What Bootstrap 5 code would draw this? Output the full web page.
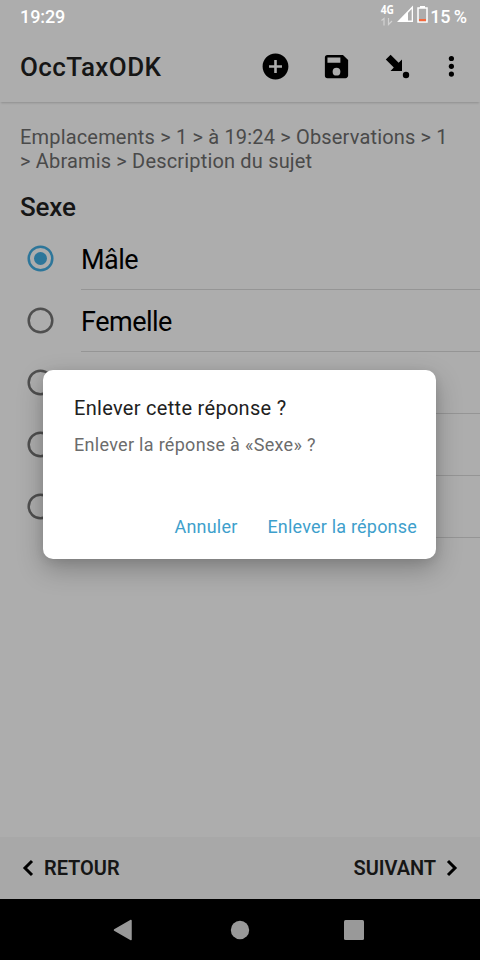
<!DOCTYPE html>
<html lang="fr">
<head>
<meta charset="utf-8">
<meta name="viewport" content="width=device-width, initial-scale=1">
<title>OccTaxODK</title>
<link href="https://cdn.jsdelivr.net/npm/bootstrap@5.3.0/dist/css/bootstrap.min.css" rel="stylesheet">
<style>
body{font-family:Roboto,sans-serif;background:#adadad;color:#000;overflow:hidden}
.screen{width:480px;height:960px}
svg{display:block;flex:none}
.status{height:33px;padding:0 13px 0 20px;color:#fff;font-size:18px;font-weight:500;line-height:33px}
.clock{letter-spacing:-.1px}
.battery{letter-spacing:-.1px;word-spacing:-1px;margin-left:-1px}
.net{width:15px;margin-right:2px}
.appbar{height:69px;padding:0 25px 2px 20px;box-shadow:0 2px 2px -1px rgba(0,0,0,.18)}
.app-title{font-size:26px;font-weight:500;line-height:32px;letter-spacing:.42px;color:#161616}
.tools{gap:30px}
.crumbs{margin:23px 20px 0;height:48px;font-size:20px;line-height:24px;letter-spacing:.17px;color:#4a4a4a;white-space:nowrap}
.question{margin:16px 20px 0;font-size:26px;line-height:36px;font-weight:500;letter-spacing:-.15px;color:#161616}
.options{margin-top:3px}
.option{height:62px;padding-left:25px}
.option-label{margin-left:25px;height:62px;padding-top:2px;border-bottom:1px solid #959595;font-size:27px;line-height:60px;letter-spacing:-.5px}
.pager{height:62px;padding:0 12px;background:#a8a8a8;font-size:20px;font-weight:600;letter-spacing:-.05px;color:#161616}
.keys{height:61px;background:#000}
.dialog{left:43px;top:370px;width:393px;height:189px;border:0;border-radius:10px;background:#fff;padding:24px 19px 18px 31px;box-shadow:0 10px 26px rgba(0,0,0,.26),0 2px 10px rgba(0,0,0,.08)}
.dialog-title{font-size:20px;line-height:28px;letter-spacing:.3px;color:#212121}
.dialog-text{font-size:18px;line-height:24px;margin-top:11px;letter-spacing:.3px;color:#6c6c6c}
.actions{gap:30px}
.action{font-size:18px;line-height:28px;letter-spacing:.2px;color:#3e9fcc}
</style>
<script src="https://cdn.jsdelivr.net/npm/bootstrap@5.3.0/dist/js/bootstrap.bundle.min.js"></script>
</head>
<body>
<div class="screen d-flex flex-column position-relative overflow-hidden">
  <div class="status d-flex align-items-center flex-shrink-0">
    <span class="clock me-auto">19:29</span>
    <svg class="net" width="15" height="33" viewBox="0 0 15 33"><text x="0.800" y="14" font-size="11.500" font-weight="700" fill="#fff" textLength="13.200" lengthAdjust="spacingAndGlyphs" font-family="Open Sans, sans-serif">4G</text><path d="M1.500 20.500l2.500-2V25.500M8.500 18v6.500l3.500-3.500" fill="none" stroke="#d2d2d2" stroke-width="1.200"/></svg>
    <svg width="34" height="33" viewBox="0 0 34 33"><path d="M0 22L16 5.500V22z" fill="#fff"/><path d="M11 12.800l3.700-3.700V20.500h-3.700z" fill="#adadad"/><path d="M21 8h9v14h-9z" fill="none" stroke="#fff" stroke-width="1.500"/><path d="M23 6h5v2h-5z" fill="#fff"/><path d="M22 19h7v2.200h-7z" fill="#f4683c"/></svg>
    <span class="battery">15 %</span>
  </div>
  <header class="appbar d-flex align-items-center flex-shrink-0">
    <div class="app-title me-auto">OccTaxODK</div>
    <div class="tools d-flex align-items-center">
      <svg width="31" height="31" viewBox="0 0 24 24"><path d="M12 2C6.480 2 2 6.480 2 12s4.480 10 10 10 10-4.480 10-10S17.520 2 12 2zm5 11h-4v4h-2v-4H7v-2h4V7h2v4h4v2z"/></svg>
      <svg width="31" height="31" viewBox="0 0 24 24"><path d="M17 3H5a2 2 0 0 0-2 2v14a2 2 0 0 0 2 2h14c1.100 0 2-.9 2-2V7l-4-4zm-5 16a3 3 0 1 1 0-6 3 3 0 0 1 0 6zm3-10H5V5h10v4z"/></svg>
      <svg width="31" height="31" viewBox="0 0 31 31"><path d="M3.800 8.600L8.600 3.800L16.600 11.800L20 8.500V20H8.500L11.800 16.600z"/><circle cx="24" cy="24" r="3.200"/></svg>
      <svg class="ms-1" width="8" height="31" viewBox="0 0 8 31"><circle cx="4.400" cy="7.500" r="2.600"/><circle cx="4.400" cy="15.300" r="2.600"/><circle cx="4.400" cy="23.100" r="2.600"/></svg>
    </div>
  </header>
  <main class="flex-grow-1">
    <div class="crumbs"><span>Emplacements &gt; 1 &gt; à 19:24 &gt; Observations &gt; 1</span><br><span>&gt; Abramis &gt; Description du sujet</span></div>
    <h1 class="question">Sexe</h1>
    <div class="options">
      <div class="option d-flex"><svg width="31" height="61" viewBox="0 0 31 61"><circle cx="15.500" cy="30.500" r="11.800" fill="none" stroke="#2d769a" stroke-width="2.500"/><circle cx="15.500" cy="30.500" r="6.500" fill="#2d769a"/></svg><div class="option-label flex-grow-1">Mâle</div></div>
      <div class="option d-flex"><svg width="31" height="61" viewBox="0 0 31 61"><circle cx="15.500" cy="30.500" r="11.800" fill="none" stroke="#4f4f4f" stroke-width="2.500"/></svg><div class="option-label flex-grow-1">Femelle</div></div>
      <div class="option d-flex"><svg width="31" height="61" viewBox="0 0 31 61"><circle cx="15.500" cy="30.500" r="11.800" fill="none" stroke="#4f4f4f" stroke-width="2.500"/></svg><div class="option-label flex-grow-1"></div></div>
      <div class="option d-flex"><svg width="31" height="61" viewBox="0 0 31 61"><circle cx="15.500" cy="30.500" r="11.800" fill="none" stroke="#4f4f4f" stroke-width="2.500"/></svg><div class="option-label flex-grow-1"></div></div>
      <div class="option d-flex"><svg width="31" height="61" viewBox="0 0 31 61"><circle cx="15.500" cy="30.500" r="11.800" fill="none" stroke="#4f4f4f" stroke-width="2.500"/></svg><div class="option-label flex-grow-1"></div></div>
    </div>
  </main>
  <footer class="pager d-flex align-items-center justify-content-between flex-shrink-0">
    <div class="d-flex align-items-center"><svg width="32" height="32" viewBox="0 0 32 32"><path d="M20 9L13 16l7 7" fill="none" stroke="#000" stroke-width="3"/></svg><span>RETOUR</span></div>
    <div class="d-flex align-items-center"><span>SUIVANT</span><svg width="32" height="32" viewBox="0 0 32 32"><path d="M12 9l7 7-7 7" fill="none" stroke="#000" stroke-width="3"/></svg></div>
  </footer>
  <nav class="keys flex-shrink-0"><svg width="480" height="61" viewBox="0 0 480 61" fill="#999"><path d="M114.500 31L131 21.500V40.500z" stroke="#999" stroke-width="1.500" stroke-linejoin="round"/><circle cx="240" cy="31" r="9.200"/><rect x="344" y="21" width="20" height="20" rx="1.500"/></svg></nav>

  <div class="dialog modal-content position-absolute" role="dialog">
    <div class="dialog-title">Enlever cette réponse ?</div>
    <div class="dialog-text">Enlever la réponse à «Sexe» ?</div>
    <div class="actions d-flex justify-content-end mt-auto"><span class="action">Annuler</span><span class="action">Enlever la réponse</span></div>
  </div>
</div>
</body>
</html>
